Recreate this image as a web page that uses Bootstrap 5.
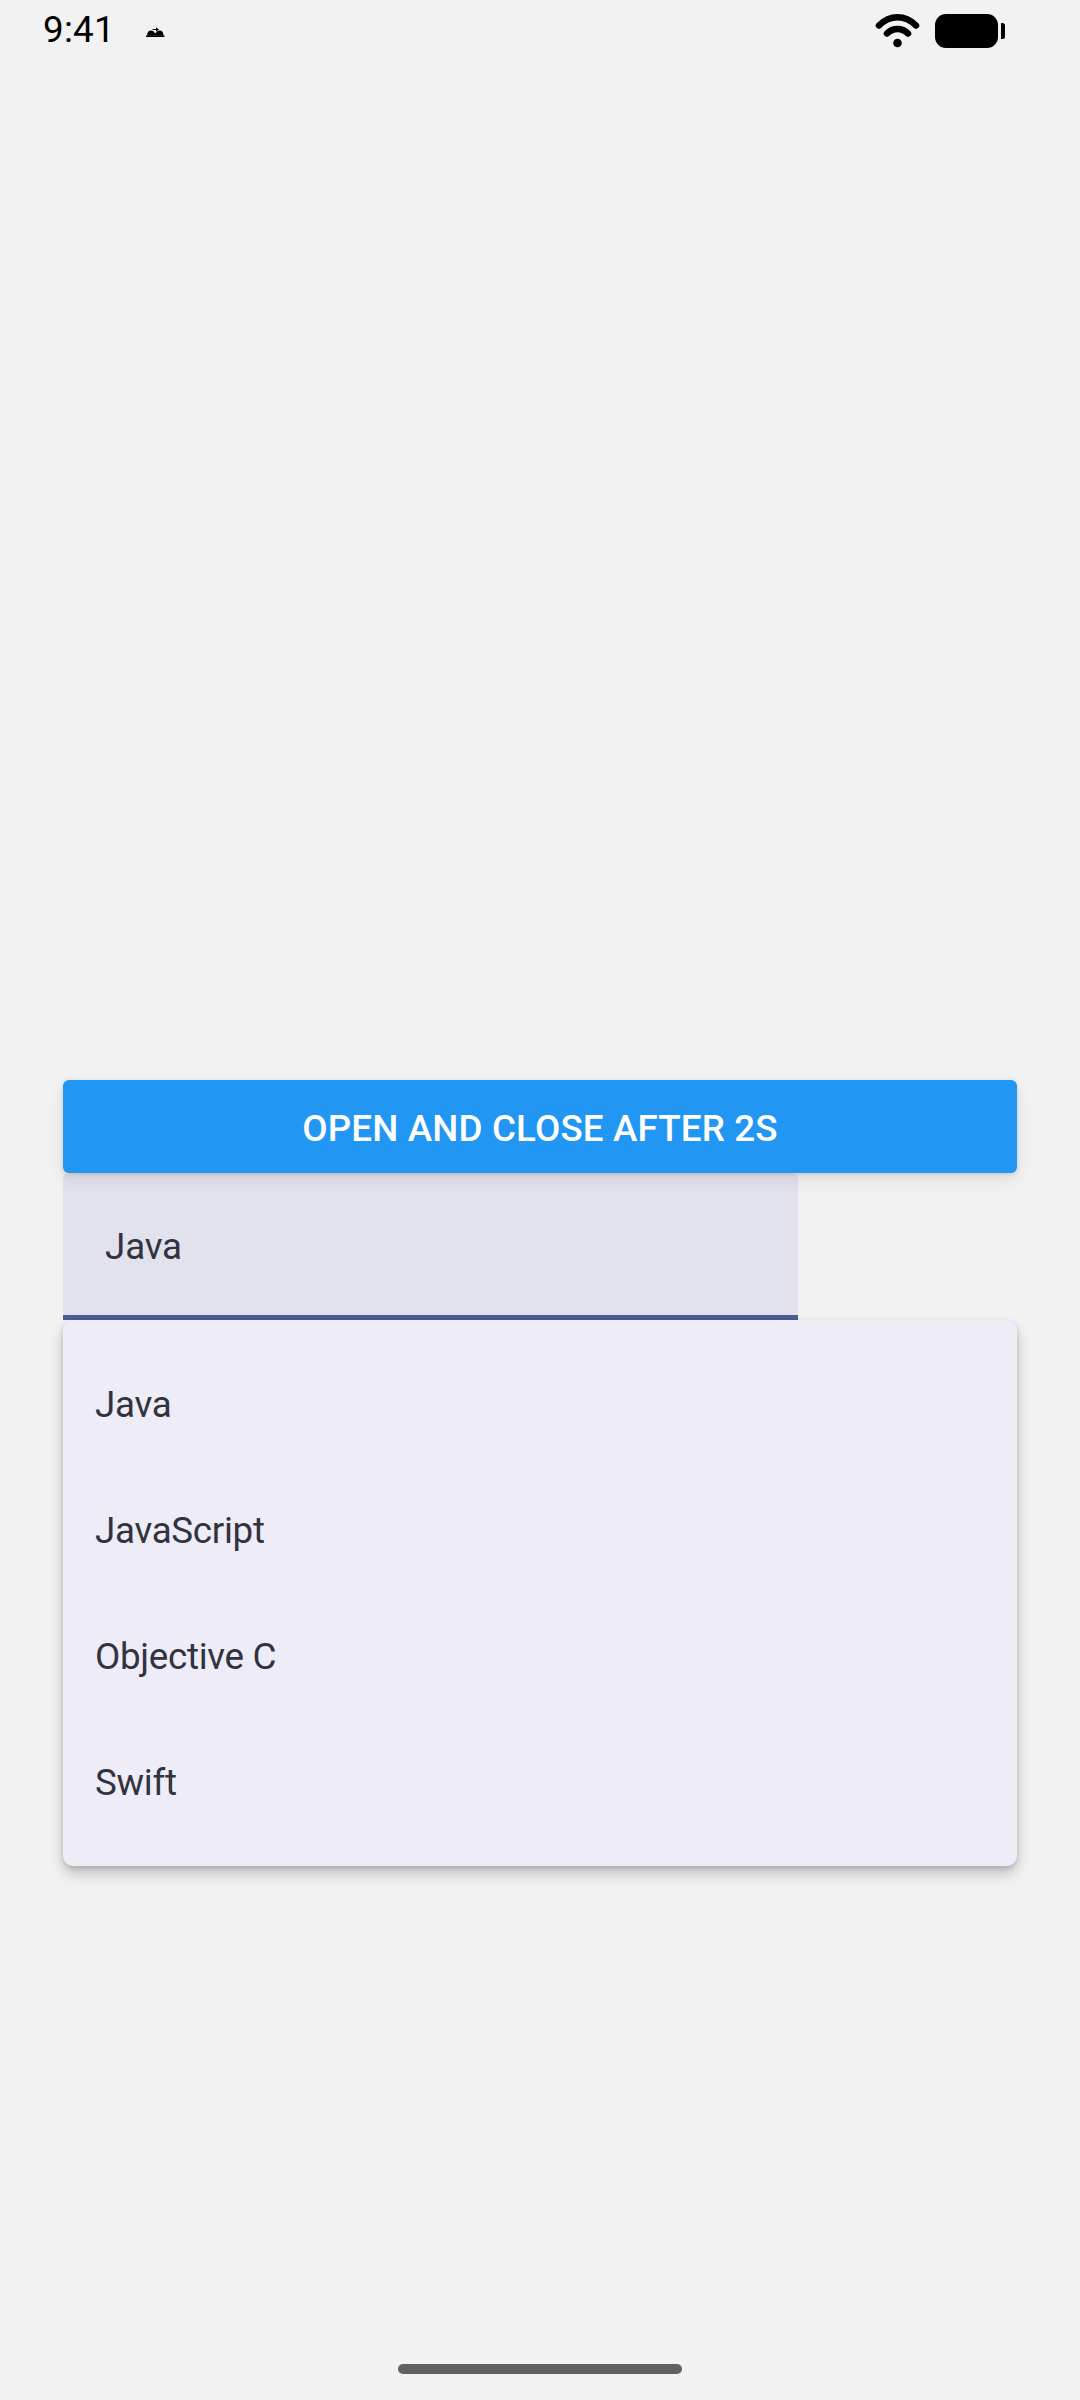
<!DOCTYPE html>
<html lang="en">
<head>
<meta charset="utf-8">
<title>Dropdown</title>
<link href="https://cdn.jsdelivr.net/npm/bootstrap@5.3.0/dist/css/bootstrap.min.css" rel="stylesheet">
<style>
html, body { height: 2400px; }
body { width: 1080px; background: #f2f2f2; font-family: Roboto, "Liberation Sans", sans-serif; overflow: hidden; }
.screen { height: 2400px; }
.status-bar { height: 80px; padding: 0 73px 18px 43px; color: #000; }
.status-time { font-size: 36.75px; line-height: 1; margin-top: 12px; letter-spacing: .25px; }
.status-note { margin-left: 31px; margin-top: 27px; display: block; }
.stage { padding: 1000px 63px 0; }
.open-btn { height: 93px; padding: 5px 0 0; border-radius: 6px; background: #2196f3; border: 0; color: #fff; font-size: 36.75px; font-weight: 500; letter-spacing: .15px; box-shadow: 0 7px 16px rgba(0,0,0,.09), 0 1px 4px rgba(0,0,0,.12); position: relative; z-index: 1; }
.open-btn:hover, .open-btn:active { background: #2196f3; color: #fff; }
.lang-field { width: 735px; height: 147px; background: #e1e2ec; border: 0; border-bottom: 5px solid #4d5c92; border-radius: 6px 6px 0 0; padding: 4px 0 0 42px; color: #32333f; font-size: 36.75px; letter-spacing: -.15px; box-shadow: none; }
.lang-field:focus { background: #e1e2ec; color: #32333f; box-shadow: none; border-color: #4d5c92; }
.lang-menu { border: 0; border-radius: 10px; background: #eeedf7; padding: 21px 0; box-shadow: 0 8px 14px rgba(0,0,0,.20), 0 2px 5px rgba(0,0,0,.14); position: relative; }
.lang-item { height: 126px; padding: 2px 32px 0; background: transparent; border: 0; color: #32333f; font-size: 36.75px; letter-spacing: -.3px; }
.home-bar { width: 284px; height: 10px; background: #616161; border-radius: 5px; margin-bottom: 26px; }
</style>
</head>
<body>
<div class="screen d-flex flex-column">
  <div class="status-bar d-flex justify-content-between align-items-start flex-shrink-0">
    <div class="d-flex align-items-start">
      <span class="status-time">9:41</span>
      <svg class="status-note" width="19" height="10" viewBox="0 0 19 10" aria-hidden="true"><path d="M0 8.500h18.500V10H0z" fill="#000"/><path d="M1 8.800C1 5.500 2.800 3.600 5 3.600c1.700 0 3 .9 3.700 2.300h1.200C10.700 4.500 12 3.600 13.700 3.600c2.200 0 3.800 1.900 3.800 5.200z" fill="#000"/><path d="M6.500 2h3.500V.3l3 2.200-3 2.200V3.100H6.500z" fill="#000"/></svg>
    </div>
    <div class="d-flex align-items-start gap-3">
      <svg width="132" height="60" viewBox="875 0 132 60" aria-hidden="true">
        <path d="M879 25.500C890 14.500 905 14.500 916 25.500" fill="none" stroke="#000" stroke-width="6.500" stroke-linecap="round"/>
        <path d="M887 33.500C893 27.500 902 27.500 908 33.500" fill="none" stroke="#000" stroke-width="6.500" stroke-linecap="round"/>
        <circle cx="897.500" cy="43" r="4.300" fill="#000"/>
        <rect x="935" y="14" width="63" height="34" rx="11" fill="#000"/>
        <path d="M1001 23h1.500a2.500 2.500 0 0 1 2.500 2.500v11a2.500 2.500 0 0 1-2.500 2.500H1001z" fill="#000"/>
      </svg>
    </div>
  </div>
  <div class="stage flex-grow-1 d-flex flex-column">
    <button type="button" class="btn open-btn w-100 d-flex align-items-center justify-content-center">OPEN AND CLOSE AFTER 2S</button>
    <input class="form-control lang-field flex-shrink-0" type="text" value="Java" aria-label="Language">
    <div class="card lang-menu">
      <div class="list-group list-group-flush">
        <div class="list-group-item lang-item d-flex align-items-center">Java</div>
        <div class="list-group-item lang-item d-flex align-items-center">JavaScript</div>
        <div class="list-group-item lang-item d-flex align-items-center">Objective C</div>
        <div class="list-group-item lang-item d-flex align-items-center">Swift</div>
      </div>
    </div>
  </div>
  <div class="home-bar align-self-center flex-shrink-0"></div>
</div>
<script src="https://cdn.jsdelivr.net/npm/bootstrap@5.3.0/dist/js/bootstrap.bundle.min.js"></script>
</body>
</html>
